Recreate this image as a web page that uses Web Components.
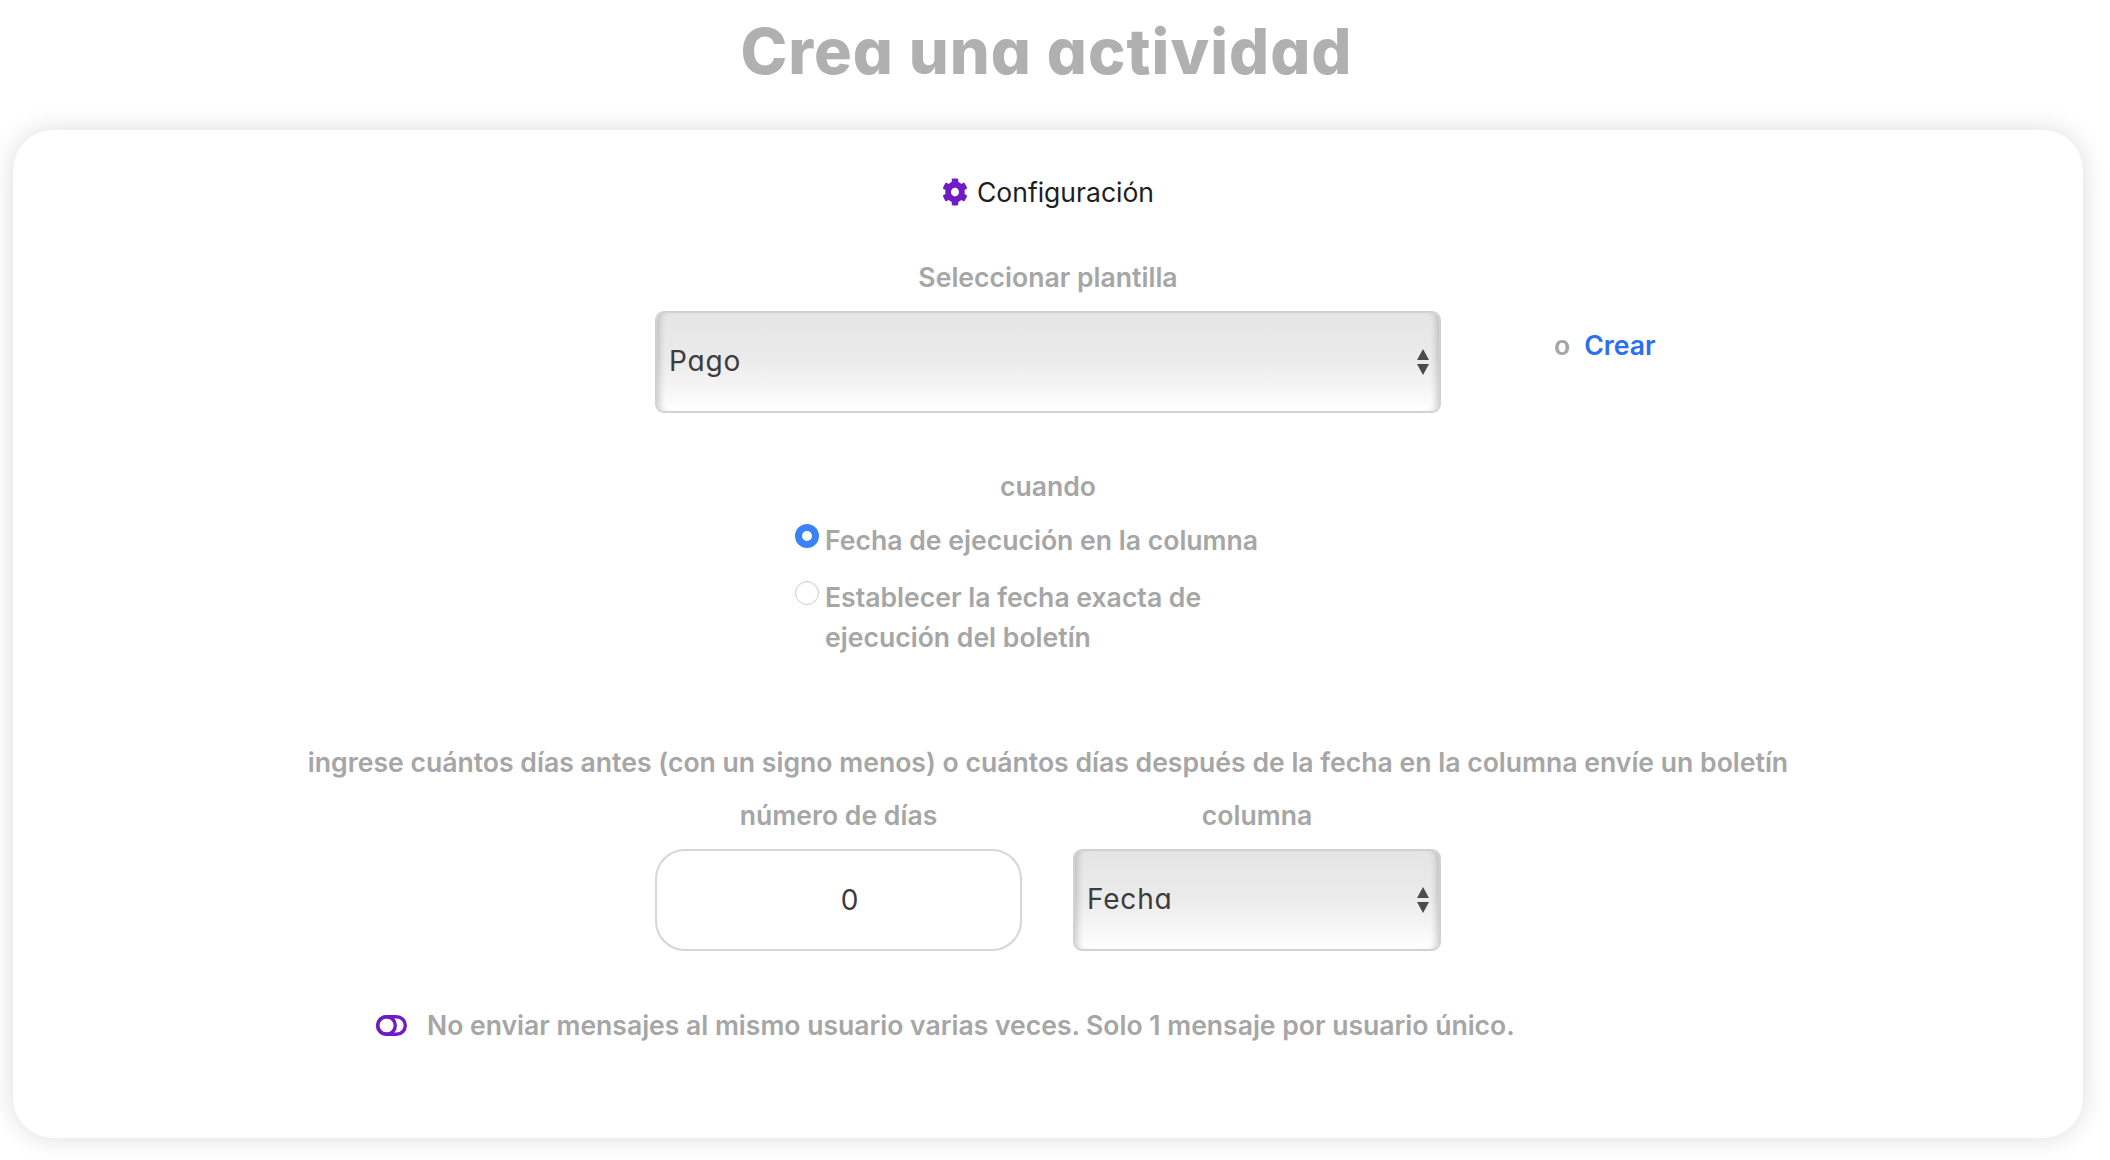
<!DOCTYPE html>
<html lang="es"><head><meta charset="utf-8"><title>Crea una actividad</title>
<style>
html,body{margin:0;background:#fff;}
body{font-family:Inter,"Liberation Sans",sans-serif;min-height:1160px;}
</style></head><body>
<x-page>
  <x-title slot="title">Crea una actividad</x-title>
  <x-card>
    <x-heading>Configuración</x-heading>
    <x-label style="margin-top:45px">Seleccionar plantilla</x-label>
    <x-template-row>
      <x-select>Pago</x-select>
      <span slot="aside">o</span>
      <a slot="link">Crear</a>
    </x-template-row>
    <x-label style="margin-top:53px">cuando</x-label>
    <x-radio-group>
      <x-radio checked>Fecha de ejecución en la columna</x-radio>
      <x-radio>Establecer la fecha exacta de ejecución del boletín</x-radio>
    </x-radio-group>
    <x-label style="margin-top:85px">ingrese cuántos días antes (con un signo menos) o cuántos días después de la fecha en la columna envíe un boletín</x-label>
    <x-fields>
      <x-field label="número de días"><x-number>0</x-number></x-field>
      <x-field label="columna"><x-select>Fecha</x-select></x-field>
    </x-fields>
    <x-toggle-row>No enviar mensajes al mismo usuario varias veces. Solo 1 mensaje por usuario único.</x-toggle-row>
  </x-card>
</x-page>
<script>
function def(name, html){
  customElements.define(name, class extends HTMLElement{
    constructor(){super();this.attachShadow({mode:'open'}).innerHTML=html;}
  });
}
const FONT='font-family:Inter,"Liberation Sans",sans-serif;';
const UI='font-family:Inter,"Liberation Sans",sans-serif;font-feature-settings:"cv11" 1;';
const BODY=FONT+'font-weight:600;font-size:26.6px;line-height:40px;color:#a6a6a6;';
def('x-page',`<style>:host{display:block;width:2070px;margin-left:13px}</style><slot name="title"></slot><slot></slot>`);
def('x-title',`<style>:host{display:block;height:130px;padding:0 3px 0 0;box-sizing:border-box;text-align:center;${UI}
 font-weight:800;font-size:63px;line-height:102px;color:#b0b0b0;letter-spacing:1px}</style><slot></slot>`);
def('x-card',`<style>:host{display:flex;flex-direction:column;align-items:center;box-sizing:border-box;height:1008px;padding-top:42px;
 background:#fff;border-radius:40px;box-shadow:0 0 26px rgba(0,0,0,.14)}</style><slot></slot>`);
def('x-heading',`<style>:host{display:flex;align-items:center;gap:9px;${FONT}font-size:26.5px;line-height:40px;color:#1d1d22}
 svg{width:26px;height:28px;fill:#6f1cc4;display:block}</style>
 <svg viewBox="0 0 512 512" preserveAspectRatio="none"><path d="M487.4 315.7l-42.6-24.6c4.3-23.2 4.3-47 0-70.2l42.6-24.6c4.9-2.8 7.1-8.6 5.5-14-11.1-35.6-30-67.8-54.7-94.6-3.8-4.1-10-5.1-14.8-2.3L380.8 110c-17.9-15.4-38.5-27.3-60.8-35.1V25.8c0-5.6-3.9-10.5-9.4-11.7-36.7-8.2-74.3-7.8-109.2 0-5.5 1.2-9.4 6.1-9.4 11.7V75c-22.2 7.9-42.8 19.8-60.8 35.1L88.7 85.5c-4.9-2.8-11-1.9-14.8 2.3-24.7 26.7-43.6 58.9-54.7 94.6-1.7 5.4.6 11.2 5.5 14L67.3 221c-4.3 23.2-4.3 47 0 70.2l-42.6 24.6c-4.9 2.8-7.1 8.6-5.5 14 11.1 35.6 30 67.8 54.7 94.6 3.8 4.1 10 5.1 14.8 2.3l42.6-24.6c17.9 15.4 38.5 27.3 60.8 35.1v49.2c0 5.6 3.9 10.5 9.4 11.7 36.7 8.2 74.3 7.8 109.2 0 5.5-1.2 9.4-6.1 9.4-11.7v-49.2c22.2-7.9 42.8-19.8 60.8-35.1l42.6 24.6c4.9 2.8 11 1.9 14.8-2.3 24.7-26.7 43.6-58.9 54.7-94.6 1.5-5.5-.7-11.3-5.6-14.1zM256 336c-44.1 0-80-35.9-80-80s35.9-80 80-80 80 35.9 80 80-35.9 80-80 80z"/></svg><slot></slot>`);
def('x-label',`<style>:host{display:block;text-align:center;${BODY}white-space:nowrap}</style><slot></slot>`);
def('x-select',`<style>:host{display:flex;align-items:center;justify-content:space-between;box-sizing:border-box;height:102px;width:100%;
 padding:0 9px 0 12px;border:2px solid #d2d2d2;border-radius:9px;
 background:linear-gradient(#e5e5e5 0%,#ebebeb 48%,#f4f4f4 72%,#fbfbfb 90%,#fff 100%);
 box-shadow:inset 8px 0 6px -5px rgba(0,0,0,.17),inset -8px 0 6px -5px rgba(0,0,0,.17);
 ${UI}font-size:28px;font-weight:400;letter-spacing:.8px;color:#3c3c3c;text-align:left}
 span{position:relative;top:-1px}
 svg{width:14px;height:26px;fill:#4c4c4c;display:block}</style><span><slot></slot></span>
 <svg viewBox="0 0 14 26"><path d="M7 0l6 11H1zM7 26L1 15h12z"/></svg>`);
def('x-template-row',`<style>:host{display:grid;grid-template-columns:786px;position:relative;margin-top:14px}
 .side{position:absolute;left:calc(100% + 113px);top:14px;white-space:nowrap;${BODY}}
 ::slotted(a){color:#2a6ff0;margin-left:14px}</style>
 <slot></slot><div class="side"><slot name="aside"></slot><slot name="link"></slot></div>`);
def('x-radio-group',`<style>:host{display:flex;flex-direction:column;gap:17px;width:506px;margin-top:14px}</style><slot></slot>`);
customElements.define('x-radio',class extends HTMLElement{
  constructor(){super();this.attachShadow({mode:'open'}).innerHTML=`<style>:host{display:flex;gap:6px;align-items:flex-start;${BODY}}
  .r{flex:none;width:24px;height:24px;box-sizing:border-box;border-radius:50%;margin-top:4px;border:1.5px solid #cdcdcd;background:#fff;box-shadow:inset 0 1px 2px rgba(0,0,0,.06)}
  :host([checked]) .r{border:7px solid #3b82f6;box-shadow:none}
  .t{width:440px}</style><div class="r"></div><div class="t"><slot></slot></div>`;}
});
def('x-fields',`<style>:host{display:grid;grid-template-columns:367px 368px;gap:51px;margin-top:13px}</style><slot></slot>`);
customElements.define('x-field',class extends HTMLElement{
  constructor(){super();this.attachShadow({mode:'open'}).innerHTML=`<style>:host{display:flex;flex-direction:column;gap:14px;text-align:center;${BODY}}</style><div>${this.getAttribute('label')||''}</div><slot></slot>`;}
});
def('x-number',`<style>:host{display:flex;align-items:center;justify-content:center;box-sizing:border-box;height:102px;padding-left:22px;
 border:2px solid #d6d6d6;border-radius:30px;background:#fff;${UI}font-size:28px;font-weight:400;color:#3c3c3c}</style><slot></slot>`);
def('x-toggle-row',`<style>:host{display:flex;align-items:center;gap:20px;align-self:flex-start;margin:54px 0 0 363px;${BODY}font-size:26.55px;white-space:nowrap}
 svg{width:31px;height:21px;display:block;fill:none;stroke:#6f1cc4;stroke-width:3.4}</style>
 <svg viewBox="0 0 31 21"><rect x="1.7" y="1.7" width="27.6" height="17.6" rx="8.8"/><circle cx="10.5" cy="10.5" r="8.8"/></svg><slot></slot>`);
</script>
</body></html>
